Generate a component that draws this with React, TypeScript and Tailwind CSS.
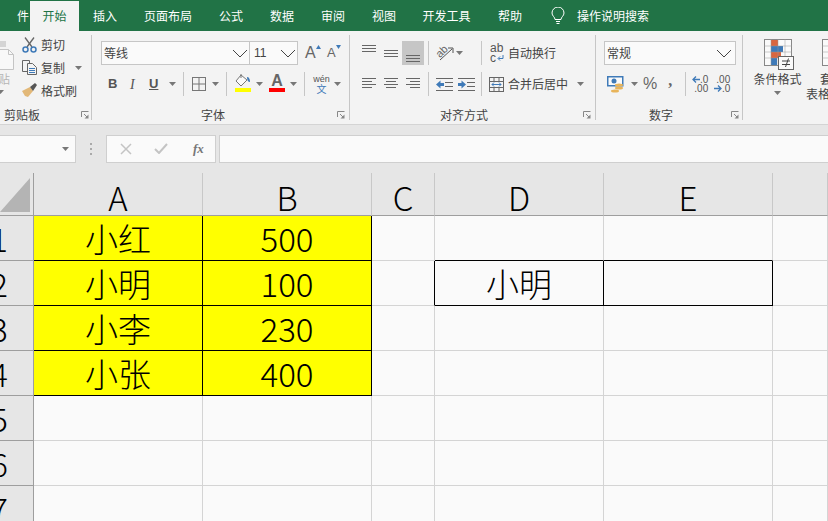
const ui = { fontFamily: '"Noto Sans CJK SC", sans-serif' };
const latin = { fontFamily: '"Liberation Sans", sans-serif' };

const tabs = ["插入", "页面布局", "公式", "数据", "审阅", "视图", "开发工具", "帮助"];
const tabWidths = ["w-[52px]", "w-[74px]", "w-[52px]", "w-[50px]", "w-[52px]", "w-[50px]", "w-[75px]", "w-[52px]"];

function Caret({ className = "" }: { className?: string }) {
  return (
    <svg width="7" height="4" viewBox="0 0 7 4" className={`shrink-0 ${className}`}>
      <polygon points="0,0 7,0 3.5,4" fill="#777" />
    </svg>
  );
}

function Chevron() {
  return (
    <svg width="16" height="9" viewBox="0 0 16 9" fill="none" stroke="#444" strokeWidth="1">
      <polyline points="1,1 8,8 15,1" />
    </svg>
  );
}

function Launcher() {
  return (
    <svg width="8" height="8" viewBox="0 0 8 8" fill="none" stroke="#888" strokeWidth="1">
      <polyline points="0.5,6 0.5,0.5 7.5,0.5" />
      <polyline points="3,3 6.5,6.5" />
      <polygon points="7.5,3.5 7.5,7.5 3.5,7.5" fill="#888" stroke="none" />
    </svg>
  );
}

function Sep({ h = "h-[24px]" }: { h?: string }) {
  return <div className={`w-px ${h} bg-[#c6c6c6] shrink-0`} />;
}

function Lines({ rows, w = 14 }: { rows: [number, number, number][]; w?: number }) {
  return (
    <svg width={w} height="16" viewBox={`0 0 ${w} 16`} stroke="#666" strokeWidth="1">
      {rows.map(([x1, x2, y]) => (
        <line key={y} x1={x1} x2={x2} y1={y + 0.5} y2={y + 0.5} />
      ))}
    </svg>
  );
}

function Indent({ flip }: { flip?: boolean }) {
  return (
    <svg width="17" height="15" viewBox="0 0 17 15" stroke="#666" strokeWidth="1">
      <line x1="0" x2="17" y1="1.5" y2="1.5" />
      <line x1="9" x2="17" y1="5.5" y2="5.5" />
      <line x1="9" x2="17" y1="9.5" y2="9.5" />
      <line x1="0" x2="17" y1="13.5" y2="13.5" />
      {flip ? (
        <path d="M0 6h3.500V3.500L8 7.500l-4.500 4V9H0z" fill="#3f7ab8" stroke="none" />
      ) : (
        <path d="M8 6H4.500V3.500L0 7.500l4.500 4V9H8z" fill="#3f7ab8" stroke="none" />
      )}
    </svg>
  );
}

function Clipboard() {
  return (
    <div className="flex w-[92px] shrink-0 flex-col border-r border-[#c6c6c6] h-[85px]">
      <div className="flex h-[72px] shrink-0">
        {/* paste button, cut off by the left edge */}
        <div className="flex w-[22px] shrink-0 flex-col items-start">
          <svg width="15" height="30" viewBox="0 0 15 30" className="mt-[5px] shrink-0" fill="none">
            <rect x="-6" y="1" width="12" height="6" fill="#d4d4d4" />
            <path d="M-1 9.500H8.500L13.500 14.500V29.500H-1z" fill="#f8f8f8" stroke="#c4c4c4" />
            <path d="M8.500 9.500V14.500H13.500" stroke="#c4c4c4" />
          </svg>
          <span className="mt-[1px] text-[12px] leading-[16px] text-[#b5b5b5] -ml-[2px]">贴</span>
          <span className="ml-[-3px] mt-[3px] block">
            <Caret />
          </span>
        </div>
        <div className="flex flex-col text-[12px] text-[#444]">
          <div className="flex h-[23px] items-center gap-[4px] mt-[-2px]">
            <svg width="15" height="16" viewBox="0 0 15 16" fill="none" stroke="#666" strokeWidth="1.300">
              <line x1="3" y1="0.500" x2="10" y2="10" />
              <line x1="12" y1="0.500" x2="5" y2="10" />
              <circle cx="3.500" cy="12.500" r="2.500" stroke="#3f7ab8" strokeWidth="1.500" />
              <circle cx="11.500" cy="12.500" r="2.500" stroke="#3f7ab8" strokeWidth="1.500" />
            </svg>
            <span>剪切</span>
          </div>
          <div className="flex h-[23px] items-center gap-[4px]">
            <svg width="15" height="15" viewBox="0 0 15 15" fill="none" stroke="#666">
              <path d="M0.500 0.500H7.500V11.500H0.500z" />
              <path d="M5.500 3.500H10.500L14.500 7.500V14.500H5.500z" fill="#f3f3f3" />
              <line x1="7" x2="13" y1="8.500" y2="8.500" stroke="#3f7ab8" />
              <line x1="7" x2="13" y1="10.500" y2="10.500" stroke="#3f7ab8" />
              <line x1="7" x2="13" y1="12.500" y2="12.500" stroke="#3f7ab8" />
            </svg>
            <span>复制</span>
            <Caret className="ml-[6px]" />
          </div>
          <div className="flex h-[23px] items-center gap-[4px]">
            <svg width="15" height="15" viewBox="0 0 15 15">
              <path d="M0 8 8 4 11 8 6 14 3 13z" fill="#e2b878" />
              <path d="M8 4l5-4 2 2-4 6z" fill="#555" />
            </svg>
            <span>格式刷</span>
          </div>
        </div>
      </div>
      <div className="flex h-[16px] shrink-0 items-center text-[12px] text-[#444] leading-[16px]">
        <span className="ml-[4px]">剪贴板</span>
        <span className="ml-[41px] flex">
          <Launcher />
        </span>
      </div>
    </div>
  );
}

function FontGroup() {
  return (
    <div className="flex w-[257px] shrink-0 flex-col border-r border-[#c6c6c6] h-[85px]">
      <div className="flex h-[72px] shrink-0 flex-col pl-[8px]">
        <div className="flex items-center mt-[6px]">
          <div className="flex h-[24px] w-[149px] items-center justify-between border border-[#c6c6c6] bg-[#fafafa] pl-[2px] pr-[1px] text-[12px] text-[#444]">
            <span>等线</span>
            <Chevron />
          </div>
          <div className="flex h-[24px] w-[48px] items-center justify-between border border-[#c6c6c6] border-l-0 bg-[#fafafa] pl-[4px] pr-[1px] text-[12px] text-[#444]">
            <span style={latin}>11</span>
            <Chevron />
          </div>
          <div className="ml-[7px] flex items-start gap-[6px] text-[16px] leading-[18px] text-[#666]" style={latin}>
            <span className="flex w-[16px]">
              A<svg width="5" height="4" viewBox="0 0 5 4" className="mt-[1px] shrink-0"><polygon points="0,4 5,4 2.500,0" fill="#3f7ab8" /></svg>
            </span>
            <span className="flex w-[15px] text-[13px]">
              A<svg width="5" height="4" viewBox="0 0 5 4" className="mt-[1px] shrink-0"><polygon points="0,0 5,0 2.500,4" fill="#3f7ab8" /></svg>
            </span>
          </div>
        </div>
        <div className="flex h-[24px] items-center mt-[7px] text-[#555]" style={latin}>
          <span className="ml-[7px] w-[22px] text-[13px] font-bold">B</span>
          <span className="w-[19px] text-[14px] italic" style={{ fontFamily: '"Liberation Serif", serif' }}>I</span>
          <span className="w-[20px] text-[13px] font-bold underline">U</span>
          <Caret />
          <div className="ml-[7px] mr-[8px]"><Sep /></div>
          <svg width="14" height="14" viewBox="0 0 14 14" fill="none" stroke="#777">
            <rect x="0.500" y="0.500" width="13" height="13" />
            <line x1="7" x2="7" y1="0" y2="14" />
            <line x1="0" x2="14" y1="7" y2="7" />
          </svg>
          <Caret className="ml-[6px]" />
          <div className="ml-[7px] mr-[7px]"><Sep /></div>
          <div className="mb-[2px] flex w-[17px] flex-col items-center">
            <svg width="16" height="14" viewBox="0 0 16 14" fill="none" stroke="#777">
              <path d="M6 1 1 7l5 5 6-6z" fill="#fafafa" />
              <path d="M6 0V4" />
              <path d="M12 3c2 0 3 2 3 5-2 0-3-2-3-5z" fill="#3f7ab8" stroke="none" />
            </svg>
            <div className="h-[4px] w-[16px] bg-[#ffff00]" />
          </div>
          <Caret className="ml-[5px]" />
          <div className="mb-[2px] ml-[6px] flex w-[16px] flex-col items-center">
            <span className="text-[16px] leading-[14px] font-bold text-[#666]">A</span>
            <div className="h-[4px] w-[16px] bg-[#ff0000]" />
          </div>
          <Caret className="ml-[5px]" />
          <div className="ml-[7px] mr-[8px]"><Sep /></div>
          <div className="flex w-[17px] flex-col items-center leading-none">
            <span className="text-[9px] text-[#555]">wén</span>
            <span className="text-[10px] text-[#3f7ab8]" style={ui}>文</span>
          </div>
          <Caret className="ml-[4px]" />
        </div>
      </div>
      <div className="flex h-[16px] shrink-0 items-center text-[12px] leading-[16px] text-[#444]">
        <span className="ml-[108px]">字体</span>
        <span className="ml-[112px] flex">
          <Launcher />
        </span>
      </div>
    </div>
  );
}

function AlignGroup() {
  return (
    <div className="flex w-[246px] shrink-0 flex-col border-r border-[#c6c6c6] h-[85px]">
      <div className="flex h-[72px] shrink-0 flex-col pl-[8px]">
        <div className="flex h-[24px] items-center mt-[6px]">
          <div className="flex h-[24px] w-[22px] items-start justify-center pt-[2px]">
            <Lines rows={[[0, 14, 2], [0, 14, 5], [0, 14, 8]]} />
          </div>
          <div className="flex h-[24px] w-[22px] items-center justify-center">
            <Lines rows={[[0, 14, 5], [0, 14, 8], [0, 14, 11]]} />
          </div>
          <div className="flex h-[24px] w-[22px] items-end justify-center bg-[#c6c6c6] pb-[2px]">
            <Lines rows={[[0, 14, 8], [0, 14, 11], [0, 14, 14]]} />
          </div>
          <div className="ml-[4px] mr-[7px]"><Sep /></div>
          <svg width="18" height="16" viewBox="0 0 18 16" fill="none" stroke="#666">
            <text x="0" y="10" fontSize="11" fill="#666" stroke="none" transform="rotate(-45 6 7)" style={latin}>ab</text>
            <path d="M4 15 16 4" stroke="#555" />
            <path d="M12 3h5v5" stroke="#555" />
          </svg>
          <Caret className="ml-[2px]" />
          <div className="ml-[18px] mr-[8px]"><Sep /></div>
          <div className="flex w-[15px] flex-col text-[12px] leading-[10px] text-[#555]" style={latin}>
            <span>ab</span>
            <span className="flex items-center">
              c
              <svg width="7" height="6" viewBox="0 0 7 6" fill="none" stroke="#3f7ab8" className="ml-[1px] shrink-0">
                <path d="M6 0v3.500H1.500M3 1.500 1 3.500l2 2" />
              </svg>
            </span>
          </div>
          <span className="ml-[3px] text-[12px] text-[#444]">自动换行</span>
        </div>
        <div className="flex h-[24px] items-center mt-[7px]">
          <div className="flex w-[22px] justify-center">
            <Lines rows={[[0, 14, 2], [0, 10, 5], [0, 14, 8], [0, 10, 11]]} />
          </div>
          <div className="flex w-[22px] justify-center">
            <Lines rows={[[0, 14, 2], [2, 12, 5], [0, 14, 8], [2, 12, 11]]} />
          </div>
          <div className="flex w-[22px] justify-center">
            <Lines rows={[[0, 14, 2], [4, 14, 5], [0, 14, 8], [4, 14, 11]]} />
          </div>
          <div className="ml-[4px] mr-[7px]"><Sep /></div>
          <Indent />
          <span className="ml-[5px]"><Indent flip /></span>
          <div className="ml-[6px] mr-[7px]"><Sep /></div>
          <svg width="15" height="15" viewBox="0 0 15 15" fill="none" stroke="#666">
            <rect x="0.500" y="0.500" width="14" height="14" />
            <line x1="0" x2="15" y1="4.500" y2="4.500" />
            <line x1="0" x2="15" y1="10.500" y2="10.500" />
            <line x1="5" x2="5" y1="0" y2="4" />
            <line x1="10" x2="10" y1="0" y2="4" />
            <line x1="5" x2="5" y1="11" y2="15" />
            <line x1="10" x2="10" y1="11" y2="15" />
            <path d="M3 7.500H12M5 5.500 3 7.500l2 2M10 5.500l2 2-2 2" stroke="#3f7ab8" />
          </svg>
          <span className="ml-[4px] text-[12px] text-[#444]">合并后居中</span>
          <Caret className="ml-[9px]" />
        </div>
      </div>
      <div className="flex h-[16px] shrink-0 items-center text-[12px] leading-[16px] text-[#444]">
        <span className="ml-[90px]">对齐方式</span>
        <span className="ml-[95px] flex">
          <Launcher />
        </span>
      </div>
    </div>
  );
}

function Arrow({ flip }: { flip?: boolean }) {
  return (
    <svg width="8" height="7" viewBox="0 0 8 7" fill="none" stroke="#3f7ab8" strokeWidth="1.300" className="shrink-0">
      {flip ? <path d="M0 3.500h7M4 0.500l3 3-3 3" /> : <path d="M8 3.500H1M4 0.500l-3 3 3 3" />}
    </svg>
  );
}

function NumberGroup() {
  return (
    <div className="flex w-[147px] shrink-0 flex-col border-r border-[#c6c6c6] h-[85px]">
      <div className="flex h-[72px] shrink-0 flex-col pl-[8px]">
        <div className="mt-[6px] flex h-[24px] w-[132px] items-center justify-between border border-[#c6c6c6] bg-[#fafafa] pl-[2px] pr-[3px] text-[12px] text-[#444]">
          <span>常规</span>
          <Chevron />
        </div>
        <div className="mt-[7px] flex h-[24px] items-center">
          <svg width="17" height="17" viewBox="0 0 17 17" className="ml-[3px]">
            <rect x="0.750" y="0.750" width="15" height="9" fill="#fafafa" stroke="#3f7ab8" strokeWidth="1.500" />
            <circle cx="7" cy="5" r="2.500" fill="#3f7ab8" />
            <ellipse cx="12" cy="9" rx="4" ry="1.500" fill="#e8b45a" />
            <ellipse cx="12" cy="12" rx="4" ry="1.500" fill="#e8b45a" />
            <ellipse cx="8" cy="15" rx="4" ry="1.500" fill="#e8b45a" />
          </svg>
          <Caret className="ml-[7px]" />
          <span className="ml-[5px] text-[16px] text-[#666]" style={latin}>%</span>
          <span className="ml-[11px] mt-[-7px] text-[16px] font-bold text-[#666]" style={{ fontFamily: '"Liberation Serif", serif' }}>,</span>
          <div className="ml-[13px] mr-[7px]"><Sep /></div>
          <div className="flex w-[15px] flex-col items-end text-[10px] leading-[9px] text-[#555]" style={latin}>
            <span className="flex items-center"><Arrow />.0</span>
            <span>.00</span>
          </div>
          <div className="ml-[7px] flex w-[15px] flex-col items-end text-[10px] leading-[9px] text-[#555]" style={latin}>
            <span>.00</span>
            <span className="flex items-center"><Arrow flip />.0</span>
          </div>
        </div>
      </div>
      <div className="flex h-[16px] shrink-0 items-center text-[12px] leading-[16px] text-[#444]">
        <span className="ml-[53px]">数字</span>
        <span className="ml-[58px] flex">
          <Launcher />
        </span>
      </div>
    </div>
  );
}

function StylesGroup() {
  return (
    <div className="flex flex-1 overflow-hidden text-[12px] leading-[15px] text-[#444]">
      <div className="flex w-[60px] shrink-0 flex-col items-center pl-[9px]">
        <svg width="30" height="32" viewBox="0 0 30 32" className="ml-[2px] mt-[4px] shrink-0">
          <rect x="0.500" y="0.500" width="27" height="26" fill="#fafafa" stroke="#888" />
          <rect x="7" y="1" width="7" height="6" fill="#d9663f" />
          <rect x="7" y="7" width="12" height="6" fill="#3f7ab8" />
          <rect x="7" y="13" width="10" height="6" fill="#d9663f" />
          <rect x="7" y="19" width="6" height="7" fill="#3f7ab8" />
          <path d="M0 7h28M0 13h28M0 19h28M7 0v27M14 0v27M21 0v27" stroke="#999" fill="none" strokeWidth="0.500" />
          <rect x="14.500" y="17.500" width="15" height="13" fill="#fafafa" stroke="#666" />
          <path d="M18 22h8M18 25.500h8M24.500 19.500l-3 8.500" stroke="#444" fill="none" />
        </svg>
        <span className="whitespace-nowrap">条件格式</span>
        <Caret className="mt-[5px]" />
      </div>
      <div className="flex shrink-0 flex-col items-start pl-[3px]">
        <svg width="30" height="32" viewBox="0 0 30 32" className="mt-[4px] ml-[16px] shrink-0">
          <rect x="0.500" y="0.500" width="27" height="26" fill="#fafafa" stroke="#888" />
          <path d="M0 7h28M0 13h28M0 19h28" stroke="#999" fill="none" strokeWidth="0.500" />
        </svg>
        <span className="pl-[14px]">套</span>
        <span className="whitespace-nowrap">表格</span>
      </div>
    </div>
  );
}

function FormulaBar() {
  return (
    <div className="flex h-[49px] items-center border-t border-[#d4d4d4] bg-[#e6e6e6] pb-[2px] pt-[1px]">
      <div className="flex h-[28px] w-[76px] items-center justify-end border border-l-0 border-[#cfcfcf] bg-[#fafafa] pr-[3px]">
        <Caret className="mr-[3px]" />
      </div>
      <div className="ml-[14px] flex w-[3px] flex-col gap-[3px]">
        <span className="h-[2px] w-[2px] bg-[#aaa]" />
        <span className="h-[2px] w-[2px] bg-[#aaa]" />
        <span className="h-[2px] w-[2px] bg-[#aaa]" />
      </div>
      <div className="ml-[13px] flex h-[28px] w-[110px] items-center border border-[#cfcfcf] bg-[#fafafa]">
        <svg width="12" height="12" viewBox="0 0 12 12" className="ml-[13px]" fill="none" stroke="#c4c4c4" strokeWidth="1.500">
          <path d="M1 1l10 10M11 1 1 11" />
        </svg>
        <svg width="14" height="11" viewBox="0 0 14 11" className="ml-[22px]" fill="none" stroke="#c4c4c4" strokeWidth="2">
          <path d="M1 6l4 4 8-9" />
        </svg>
        <span className="ml-[25px] text-[13px] font-bold italic text-[#777]" style={{ fontFamily: '"Liberation Serif", serif' }}>fx</span>
      </div>
      <div className="ml-[3px] h-[28px] flex-1 border border-r-0 border-[#cfcfcf] bg-[#fafafa]" />
    </div>
  );
}

const sheet = [
  ["小红", "500"],
  ["小明", "100"],
  ["小李", "230"],
  ["小张", "400"],
];

const cols = ["A", "B", "C", "D", "E", ""];
const rows = [1, 2, 3, 4, 5, 6, 7];

function cellBorder(r: number, c: number) {
  if (r < 4 && c < 2) return "bg-[#ffff00] border-r-black border-b-black";
  if (r === 0 && (c === 3 || c === 4)) return "border-r-[#d4d4d4] border-b-black";
  if (r === 1 && c === 2) return "border-r-black border-b-[#d4d4d4]";
  if (r === 1 && (c === 3 || c === 4)) return "border-r-black border-b-black";
  return "border-r-[#d4d4d4] border-b-[#d4d4d4]";
}

function cellText(r: number, c: number) {
  if (r < 4 && c < 2) return sheet[r][c];
  if (r === 1 && c === 3) return "小明";
  return "";
}

function Sheet() {
  return (
    <div
      className="grid flex-1 overflow-hidden bg-[#fafafa] text-[33px] font-light text-black grid-cols-[34px_169px_169px_63px_169px_169px_1fr] grid-rows-[43px_45px_45px_45px_45px_45px_45px_45px]"
      style={ui}
    >
      <div className="relative border-r border-b border-[#9e9e9e] bg-[#e6e6e6]">
        <svg width="31" height="34" viewBox="0 0 31 34" className="absolute left-0 top-[5px]">
          <polygon points="30,0 30,34 0,34" fill="#b4b4b4" />
        </svg>
      </div>
      {cols.map((c) => (
        <div key={c} className="flex items-center justify-center border-r border-b border-r-[#c8c8c8] border-b-[#9e9e9e] bg-[#e6e6e6] pt-[6px] leading-none">
          {c}
        </div>
      ))}
      {rows.map((n, r) => (
        <div key={n} className="contents">
          <div className="flex items-center justify-end overflow-hidden border-r border-b border-[#9e9e9e] bg-[#e6e6e6] pr-[25px] leading-none">
            {n}
          </div>
          {cols.map((c, i) => (
            <div key={c} className={`flex items-center justify-center border-r border-b leading-none ${cellBorder(r, i)}`}>
              {cellText(r, i)}
            </div>
          ))}
        </div>
      ))}
    </div>
  );
}

export default function App() {
  return (
    <div className="flex h-[521px] w-[828px] flex-col overflow-hidden" style={ui}>
      {/* Tabs */}
      <div className="flex h-[31px] shrink-0 items-end bg-[#217346] text-[12px] text-white">
        <div className="flex h-[31px] w-[30px] items-center justify-end overflow-hidden pr-[1px]">件</div>
        <div className="flex h-[30px] w-[49px] items-center justify-center bg-[#f3f3f3] text-[#217346]">开始</div>
        {tabs.map((t, i) => (
          <div key={t} className={`flex h-[31px] items-center justify-center ${tabWidths[i]}`}>
            {t}
          </div>
        ))}
        <div className="ml-[15px] flex h-[31px] items-center gap-[12px]">
          <svg width="14" height="18" viewBox="0 0 14 18" fill="none" stroke="#fff">
            <path d="M4 12.500C4 10 1 9 1 6a6 6 0 0 1 12 0c0 3-3 4-3 6.500z" />
            <path d="M5 14.500h4M5.500 16.500h3" />
          </svg>
          <span>操作说明搜索</span>
        </div>
      </div>
      {/* Ribbon */}
      <div className="flex h-[93px] shrink-0 bg-[#f3f3f3] pt-[4px]">
        <Clipboard />
        <div className="w-px shrink-0" />
        <FontGroup />
        <AlignGroup />
        <NumberGroup />
        <StylesGroup />
      </div>
      <FormulaBar />
      <Sheet />
    </div>
  );
}
